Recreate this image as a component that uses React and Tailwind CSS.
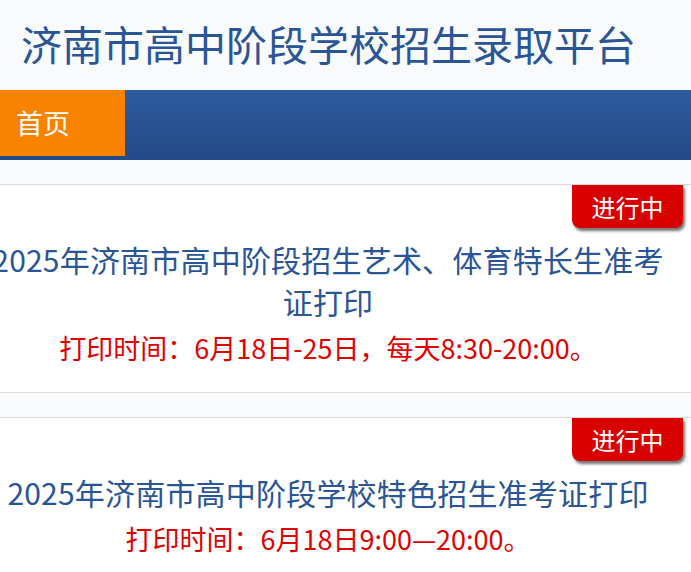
import React from "react";

const tasks = [
  {
    id: 1,
    title: "2025年济南市高中阶段招生艺术、体育特长生准考证打印",
    time: "打印时间：6月18日-25日，每天8:30-20:00。",
  },
  {
    id: 2,
    title: "2025年济南市高中阶段学校特色招生准考证打印",
    time: "打印时间：6月18日9:00—20:00。",
  },
];

const TaskCard = ({ task }) => {
  return (
    <div className="bg-white border-y border-[#dadada] pb-[24px]">
      <div className="flex justify-end pr-[8px]">
        <span className="w-[111px] h-[43px] flex items-center justify-center bg-[#d90000] text-white text-[24px] leading-none rounded-b-[8px] shadow-[2px_3px_3px_rgba(0,0,0,0.55)]">
          进行中
        </span>
      </div>
      <div className="-ml-2 mr-[27px] text-center">
        <h2 className="text-[30px] leading-[42px] text-[#2a5597] pt-[10px] tracking-[0.2px]">
          {task.title}
        </h2>
        <p className="text-[27px] leading-[40px] text-[#e00000] mt-[6px]">
          {task.time}
        </p>
      </div>
    </div>
  );
};

export default function App() {
  return (
    <div
      className="min-h-screen bg-[#f9fafc] overflow-hidden"
      style={{ fontFamily: '"Noto Sans CJK SC", "Noto Sans", sans-serif' }}
    >
      {/* Header */}
      <header className="h-[90px] flex items-center pl-[21px] pb-[4px]">
        <h1 className="text-[41px] leading-none text-[#2a5597]">
          济南市高中阶段学校招生录取平台
        </h1>
      </header>

      {/* Nav */}
      <nav className="h-[70px] bg-gradient-to-b from-[#2c5b9f] to-[#244b87]">
        <a className="w-[125px] h-[66px] bg-[#f98300] text-white text-[27px] flex items-center pl-[16px]">
          首页
        </a>
      </nav>

      <div className="pt-[24px] space-y-[24px]">
        {tasks.map((task) => (
          <TaskCard key={task.id} task={task} />
        ))}
      </div>
    </div>
  );
}
